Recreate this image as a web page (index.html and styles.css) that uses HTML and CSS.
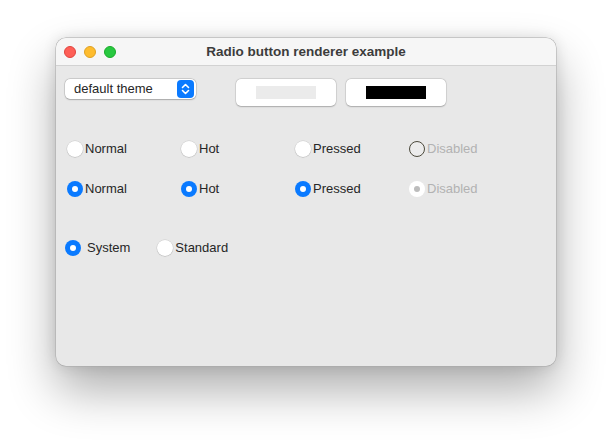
FILE: index.html
```html
<!DOCTYPE html>
<html>
<head>
<meta charset="utf-8">
<link rel="stylesheet" href="styles.css">
</head>
<body>
<div class="window">
  <div class="titlebar">
    <div class="lights">
      <span class="light red"></span>
      <span class="light yellow"></span>
      <span class="light green"></span>
    </div>
    <div class="title">Radio button renderer example</div>
  </div>
  <div class="content">
    <div class="toolbar">
      <div class="popup">
        <span class="popup-text">default theme</span>
        <span class="stepper">
          <svg width="17" height="18" viewBox="0 0 17 18">
            <path d="M5.5 7.5 L8.5 4.5 L11.5 7.5" fill="none" stroke="#fff" stroke-width="1.6" stroke-linecap="round" stroke-linejoin="round"/>
            <path d="M5.5 10.5 L8.5 13.5 L11.5 10.5" fill="none" stroke="#fff" stroke-width="1.6" stroke-linecap="round" stroke-linejoin="round"/>
          </svg>
        </span>
      </div>
      <div class="buttons">
        <div class="btn"><span class="swatch light-swatch"></span></div>
        <div class="btn"><span class="swatch dark-swatch"></span></div>
      </div>
    </div>
    <div class="grid">
      <div class="radio"><span class="dot off"></span><span class="label">Normal</span></div>
      <div class="radio"><span class="dot off"></span><span class="label">Hot</span></div>
      <div class="radio"><span class="dot off"></span><span class="label">Pressed</span></div>
      <div class="radio"><span class="dot dis-off"></span><span class="label dim">Disabled</span></div>
      <div class="radio"><span class="dot on"></span><span class="label">Normal</span></div>
      <div class="radio"><span class="dot on"></span><span class="label">Hot</span></div>
      <div class="radio"><span class="dot on"></span><span class="label">Pressed</span></div>
      <div class="radio"><span class="dot dis-on"></span><span class="label dim">Disabled</span></div>
    </div>
    <div class="mode">
      <div class="radio system"><span class="dot on"></span><span class="label">System</span></div>
      <div class="radio standard"><span class="dot off"></span><span class="label">Standard</span></div>
    </div>
  </div>
</div>
</body>
</html>
```
FILE: styles.css
```css
html, body {
  margin: 0;
  padding: 0;
  background: #ffffff;
}
body {
  font-family: "Liberation Sans", Arial, sans-serif;
  font-size: 13px;
  color: #262626;
  padding: 38px 0 0 56px;
  height: 440px;
  box-sizing: border-box;
  overflow: hidden;
}
.window {
  width: 500px;
  height: 328px;
  box-sizing: border-box;
  border-radius: 10px;
  background: #e8e8e8;
  box-shadow: 0 0 0 0.5px #a8a8a8, 0 24px 48px rgba(0,0,0,0.32), 0 0 14px rgba(0,0,0,0.12);
  overflow: hidden;
  display: flex;
  flex-direction: column;
}
.titlebar {
  height: 28px;
  flex: none;
  background: #f6f6f6;
  border-bottom: 1px solid #d2d2d2;
  box-sizing: border-box;
  display: flex;
  align-items: center;
  position: relative;
}
.lights {
  display: flex;
  gap: 8px;
  padding-left: 8px;
}
.light {
  width: 12px;
  height: 12px;
  border-radius: 50%;
  box-sizing: border-box;
}
.red { background: #fe5f57; border: 0.5px solid #e0443e; }
.yellow { background: #febc2e; border: 0.5px solid #dea123; }
.green { background: #28c840; border: 0.5px solid #1aab29; }
.title {
  position: absolute;
  left: 0;
  right: 0;
  text-align: center;
  font-weight: bold;
  font-size: 13.5px;
  color: #3c3c3c;
  pointer-events: none;
}
.content {
  flex: 1;
  padding: 13px 0 0 0;
}
.toolbar {
  display: flex;
  align-items: flex-start;
}
.popup {
  margin-left: 9px;
  width: 131px;
  height: 20px;
  box-sizing: border-box;
  background: #ffffff;
  border-radius: 5px;
  box-shadow: 0 0 0 0.5px rgba(0,0,0,0.18), 0 0.5px 1.5px rgba(0,0,0,0.2);
  display: flex;
  align-items: center;
  justify-content: space-between;
  padding: 0 2px 0 9px;
}
.popup-text {
  color: #262626;
  line-height: 20px;
}
.stepper {
  width: 17px;
  height: 18px;
  border-radius: 4px;
  background: #0a7aff;
  display: flex;
}
.buttons {
  display: flex;
  gap: 10px;
  margin-left: 40px;
}
.btn {
  width: 100px;
  height: 27px;
  box-sizing: border-box;
  background: #ffffff;
  border-radius: 5px;
  box-shadow: 0 0 0 0.5px rgba(0,0,0,0.12), 0 0.5px 1.5px rgba(0,0,0,0.22);
  display: flex;
  align-items: center;
  justify-content: center;
}
.swatch {
  width: 60px;
  height: 13px;
}
.light-swatch { background: #ebebeb; }
.dark-swatch { background: #000000; }
.grid {
  display: grid;
  grid-template-columns: repeat(4, 114px);
  grid-auto-rows: 16px;
  row-gap: 24px;
  margin: 35px 0 0 11px;
}
.radio {
  display: flex;
  align-items: center;
  height: 16px;
}
.dot {
  width: 16px;
  height: 16px;
  border-radius: 50%;
  box-sizing: border-box;
  flex: none;
  margin-right: 2px;
  position: relative;
}
.off {
  background: #ffffff;
  box-shadow: 0 0 0 0.5px rgba(0,0,0,0.12), 0 0.5px 1px rgba(0,0,0,0.15);
}
.on {
  background: #0a7aff;
}
.on::after, .dis-on::after {
  content: "";
  position: absolute;
  left: 5px;
  top: 5px;
  width: 6px;
  height: 6px;
  border-radius: 50%;
  background: #ffffff;
}
.dis-off {
  background: #ececec;
  border: 1px solid #4c4a3c;
}
.dis-on {
  background: #ffffff;
}
.dis-on::after {
  background: #bcbcbc;
}
.label {
  line-height: 16px;
}
.dim {
  color: #b2b2b2;
}
.mode {
  display: flex;
  margin: 43px 0 0 9px;
}
.system .dot { margin-right: 6px; }
.standard { margin-left: 27px; }
```
